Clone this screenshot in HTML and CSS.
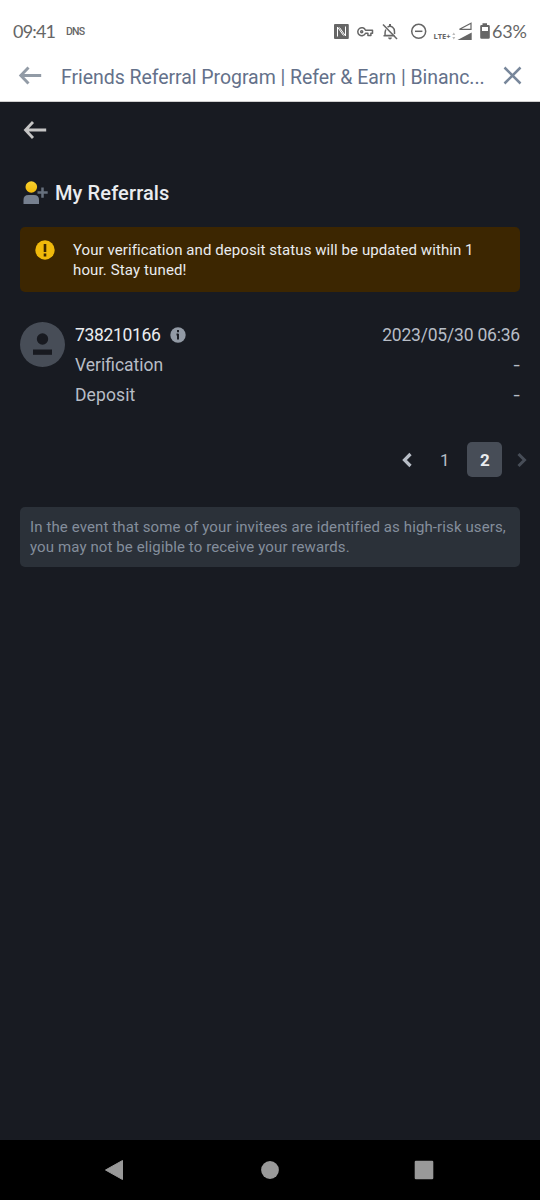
FILE: index.html
```html
<!DOCTYPE html>
<html lang="en">
<head>
<meta charset="utf-8">
<title>Friends Referral Program</title>
<link rel="stylesheet" href="styles.css">
</head>
<body>
<header class="top">
  <div class="status">
    <span class="clock">09:41</span>
    <span class="dns">DNS</span>
    <svg class="status-icons" width="160" height="24" viewBox="330 20 160 24" fill="#666">
      <rect x="334" y="24" width="14.800" height="15" rx="1"/>
      <path d="M337.500 36.500v-9.500l6 8.500M345.500 26.500v9.500l-6-8.500" fill="none" stroke="#fff" stroke-width="1"/>
      <g fill="none" stroke="#666" stroke-width="1.500" stroke-linejoin="round">
        <path d="M365.500 30.200h7v3h-1.600v2.300h-3v-2.300h-2.400a4 4 0 1 1 0-3z"/>
        <circle cx="361.700" cy="31.700" r="1" />
        <path d="M383 24.500l14 14.500"/>
        <path d="M385.800 29.500q-.8 1.500-.8 6h9.500M387.500 27.200q2.500-1.700 5 0q2 1.500 2 4.500v2.200M383.500 35.800h9.500"/>
        <circle cx="418.700" cy="31.300" r="7"/>
        <path d="M415 31.300h7.400"/>
        <path d="M459.500 29.300l11.500-6v6z" stroke-width="1.200" stroke-linejoin="miter"/>
      </g>
      <path d="M389 24h2v3h-2zM388 37.500h4q-.4 2-2 2t-2-2zM457.500 40l14.200-7.500v7.500z"/>
      <path d="M453.800 32.500l1.500 2.500h-3zM453.800 39.500l1.500-2.500h-3z" opacity=".45"/>
      <path fill-rule="evenodd" d="M482.500 25v-1.700h4.500v1.700h1.500q1.300 0 1.300 1.300v11.200q0 1.300-1.300 1.300h-7q-1.300 0-1.300-1.300v-11.200q0-1.300 1.300-1.300zM482 27v4h6v-4z"/>
      <text class="lte" x="433.500" y="38.500">LTE+</text>
    </svg>
    <span class="battery">63%</span>
  </div>
  <div class="titlebar">
    <svg width="24" height="20" viewBox="0 0 24 20" fill="none" stroke="#929ba6" stroke-width="2.900"><path d="M23.200 9.500H3M10.500 1.500L2.800 9.500L10.500 17.500"/></svg>
    <h1 class="title">Friends Referral Program | Refer &amp; Earn | Binanc...</h1>
    <svg class="close" width="20" height="20" viewBox="0 0 20 20" fill="none" stroke="#78879b" stroke-width="2.500"><path d="M2.500 1.500L18.500 17.500M18.500 1.500L2.500 17.500"/></svg>
  </div>
</header>
<main class="page">
  <svg class="back" width="24" height="20" viewBox="0 0 24 20" fill="none" stroke="#c5c5c5" stroke-width="2.800"><path d="M23.200 10H3M10 2L2.500 10L10 18"/></svg>
  <div class="heading">
    <svg width="26" height="25" viewBox="0 0 26 25">
      <defs><linearGradient id="gold" x2="0" y2="1"><stop stop-color="#f8d12f"/><stop offset="1" stop-color="#f0b90b"/></linearGradient></defs>
      <circle cx="8.300" cy="6" r="5.800" fill="url(#gold)"/>
      <path d="M.5 23v-4q0-5 5-5h5.500q5 0 5 5v4z" fill="#76808f"/>
      <path d="M14.500 11.500h10.200M19.500 6.500v10.200" stroke="#66707d" stroke-width="2.500"/>
    </svg>
    <h2 class="heading-text">My Referrals</h2>
  </div>
  <section class="alert">
    <svg width="20" height="20" viewBox="0 0 20 20"><circle cx="10" cy="10" r="9.700" fill="#f0b90b"/><path d="M10 4v8M10 13.500v3" stroke="#3c2601" stroke-width="2.600"/></svg>
    <p class="alert-text"><span class="alert-first">Your verification and deposit status will be updated within 1</span><br><span class="alert-second">hour. Stay tuned!</span></p>
  </section>
  <section class="referral">
    <svg width="45" height="45" viewBox="0 0 45 45"><circle cx="22.500" cy="22.500" r="22.500" fill="#474d57"/><circle cx="22.500" cy="17" r="5.700" fill="#181a20"/><path d="M13 27.500h19v5.300h-19z" fill="#181a20"/></svg>
    <div class="details">
      <div class="row"><span class="uid">738210166</span><svg class="info" width="16" height="16" viewBox="0 0 16 16"><circle cx="8" cy="8" r="7.700" fill="#929aa5"/><path d="M8 3v2.200M8 7v5.500M6.500 7.500h2" stroke="#181a20" stroke-width="1.900"/></svg><span class="date">2023/05/30 06:36</span></div>
      <div class="row"><span class="verification">Verification</span><span class="dash">-</span></div>
      <div class="row"><span class="deposit">Deposit</span><span class="dash">-</span></div>
    </div>
  </section>
  <nav class="pager">
    <svg width="12" height="16" viewBox="0 0 12 16" fill="none" stroke="#b7bdc6" stroke-width="3.200"><path d="M9.500 2L3.500 8L9.500 14"/></svg>
    <span class="num">1</span>
    <span class="num current">2</span>
    <svg width="12" height="16" viewBox="0 0 12 16" fill="none" stroke="#474d57" stroke-width="3"><path d="M2.500 2L8.500 8L2.500 14"/></svg>
  </nav>
  <p class="note"><span class="note-first">In the event that some of your invitees are identified as high-risk users,</span><br><span class="note-second">you may not be eligible to receive your rewards.</span></p>
</main>
<footer class="navbar">
  <svg width="20" height="22" viewBox="0 0 20 22"><path d="M1.500 11L18.500 1.500V20.500z" fill="#999" stroke="#999" stroke-linejoin="round"/></svg>
  <svg width="20" height="20" viewBox="0 0 20 20"><circle cx="11" cy="10" r="8.900" fill="#999"/></svg>
  <svg width="20" height="20" viewBox="0 0 20 20"><rect x=".7" y=".7" width="18.600" height="18.600" rx="1.200" fill="#999"/></svg>
</footer>
</body>
</html>
```
FILE: styles.css
```css
* { box-sizing: border-box; }
body {
  margin: 0;
  height: 1200px;
  display: flex;
  flex-direction: column;
  background: #181b22;
  font-family: Roboto, "Liberation Sans", sans-serif;
  white-space: nowrap;
}
svg { display: block; flex: none; }
h1, h2, p { margin: 0; font-weight: 400; }
.top { height: 102.400px; background: #fff; border-bottom: 1px solid #cfcfcf; }
.status { height: 52px; padding: 20px 0 0 13px; display: flex; align-items: flex-start; color: #666; line-height: 24px; }
.clock { width: 53px; font: 18px/23px Lato, sans-serif; letter-spacing: -.8px; }
.dns { font-size: 10.500px; font-weight: 500; letter-spacing: -.8px; }
.status-icons { margin-left: auto; }
.lte { font: 700 7.500px "Open Sans", sans-serif; }
.battery { width: 50px; padding-left: 2px; font: 18px/23px Lato, sans-serif; letter-spacing: -.2px; }
.titlebar { height: 48px; padding: 0 18px; display: flex; align-items: center; }
.title { width: 425px; margin-left: 19px; padding-top: 3px; color: #64718a; font-size: 19.500px; line-height: 28px; letter-spacing: -.05px; }
.close { margin-left: auto; }
.page { flex: 1; padding: 18px 20px 0; }
.back { margin-left: 3px; }
.heading { display: flex; align-items: center; gap: 6px; margin: 39px 0 0 3px; height: 28px; }
.heading-text { color: #eaecef; font-size: 20px; font-weight: 500; letter-spacing: .12px; }
.alert { height: 65px; margin-top: 20px; padding: 12.500px 15px; display: flex; gap: 18px; background: #3c2601; border-radius: 5px; }
.alert-text { color: #eaecef; font-size: 15px; line-height: 20px; letter-spacing: .075px; }
.alert-second { letter-spacing: .13px; }
.referral { display: flex; gap: 10px; margin-top: 30px; }
.details { flex: 1; margin-top: -2px; color: #b7bdc6; font-size: 17.500px; }
.row { height: 30px; display: flex; align-items: center; }
.uid { width: 85px; color: #eaecef; letter-spacing: -.35px; }
.info { margin-left: 10px; }
.date, .dash { margin-left: auto; }
.date { letter-spacing: -.2px; }
.verification { letter-spacing: 0; }
.deposit { letter-spacing: .12px; }
.dash { transform: scaleX(1.300); transform-origin: right; }
.pager { display: flex; align-items: center; height: 35px; margin: 32px -8.400px 0 0; justify-content: flex-end; color: #b7bdc6; font-size: 17px; }
.num { width: 35px; line-height: 37px; height: 35px; text-align: center; }
.pager > svg:first-child { margin-right: 14px; }
.num + .num { margin-left: 5px; }
.pager > svg:last-child { margin-left: 14px; }
.current { background: #474d57; border-radius: 5px; color: #eaecef; font-weight: 700; }
.note { height: 60px; margin-top: 30px; padding: 10px; background: #2b3139; border-radius: 5px; color: #848e9c; font-size: 15px; line-height: 20px; letter-spacing: .11px; }
.navbar { height: 60px; background: #000; display: flex; align-items: center; justify-content: space-between; padding: 0 106px 0 104px; }
```
